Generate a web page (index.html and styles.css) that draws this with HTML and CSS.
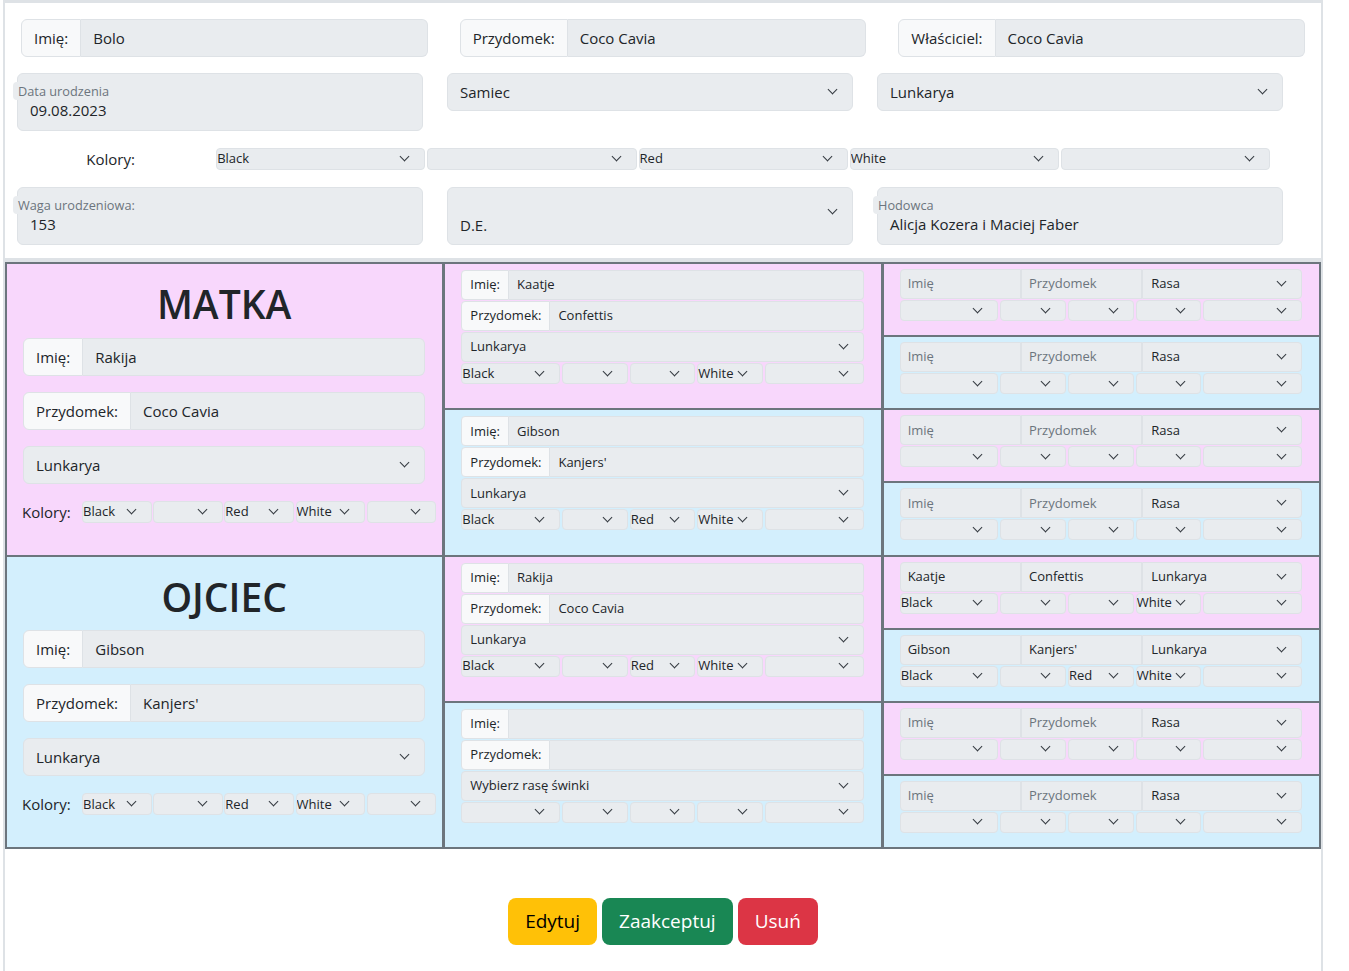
FILE: index.html
```html
<!DOCTYPE html>
<html lang="pl">
<head>
<meta charset="utf-8">
<title>Bolo – rodowód</title>
<link rel="stylesheet" href="styles.css">
</head>
<body>
<div class="page">
  <div class="row-top">
    <div class="col"><div class="ig"><span class="ig-label">Imię:</span><span class="ig-value">Bolo</span></div></div>
    <div class="col"><div class="ig"><span class="ig-label">Przydomek:</span><span class="ig-value">Coco Cavia</span></div></div>
    <div class="col"><div class="ig"><span class="ig-label">Właściciel:</span><span class="ig-value">Coco Cavia</span></div></div>
  </div>

  <div class="row-three">
    <div class="cell"><div class="floating"><span class="fl-label">Data urodzenia</span><span class="fl-value">09.08.2023</span></div></div>
    <div class="cell"><div class="sel sel-md">Samiec</div></div>
    <div class="cell"><div class="sel sel-md">Lunkarya</div></div>
  </div>

  <div class="colors-top">
    <div class="colors-top-label">Kolory:</div>
    <div class="sel sel-xs">Black</div>
    <div class="sel sel-xs"></div>
    <div class="sel sel-xs">Red</div>
    <div class="sel sel-xs">White</div>
    <div class="sel sel-xs"></div>
  </div>

  <div class="row-three row-last">
    <div class="cell"><div class="floating"><span class="fl-label">Waga urodzeniowa:</span><span class="fl-value">153</span></div></div>
    <div class="cell"><div class="sel sel-tall">D.E.</div></div>
    <div class="cell"><div class="floating"><span class="fl-label">Hodowca</span><span class="fl-value">Alicja Kozera i Maciej Faber</span></div></div>
  </div>

  <div class="divider"></div>

  <div class="pedigree">
    <div class="gen">
      <div class="pcell pink parent">
        <h1 class="parent-title">MATKA</h1>
        <div class="ig"><span class="ig-label">Imię:</span><span class="ig-value">Rakija</span></div>
        <div class="ig"><span class="ig-label">Przydomek:</span><span class="ig-value">Coco Cavia</span></div>
        <div class="sel sel-md">Lunkarya</div>
        <div class="pcolors">
          <span class="pcolors-label">Kolory:</span>
          <span class="sel sel-xs">Black</span><span class="sel sel-xs"></span><span class="sel sel-xs">Red</span><span class="sel sel-xs">White</span><span class="sel sel-xs"></span>
        </div>
      </div>
      <div class="pcell blue parent">
        <h1 class="parent-title">OJCIEC</h1>
        <div class="ig"><span class="ig-label">Imię:</span><span class="ig-value">Gibson</span></div>
        <div class="ig"><span class="ig-label">Przydomek:</span><span class="ig-value">Kanjers'</span></div>
        <div class="sel sel-md">Lunkarya</div>
        <div class="pcolors">
          <span class="pcolors-label">Kolory:</span>
          <span class="sel sel-xs">Black</span><span class="sel sel-xs"></span><span class="sel sel-xs">Red</span><span class="sel sel-xs">White</span><span class="sel sel-xs"></span>
        </div>
      </div>
    </div>

    <div class="gen">
      <div class="pcell pink gp">
        <div class="ig ig-sm"><span class="ig-label">Imię:</span><span class="ig-value">Kaatje</span></div>
        <div class="ig ig-sm"><span class="ig-label">Przydomek:</span><span class="ig-value">Confettis</span></div>
        <div class="sel sel-sm">Lunkarya</div>
        <div class="cs-row"><span class="sel sel-xs">Black</span><span class="sel sel-xs"></span><span class="sel sel-xs"></span><span class="sel sel-xs">White</span><span class="sel sel-xs"></span></div>
      </div>
      <div class="pcell blue gp">
        <div class="ig ig-sm"><span class="ig-label">Imię:</span><span class="ig-value">Gibson</span></div>
        <div class="ig ig-sm"><span class="ig-label">Przydomek:</span><span class="ig-value">Kanjers'</span></div>
        <div class="sel sel-sm">Lunkarya</div>
        <div class="cs-row"><span class="sel sel-xs">Black</span><span class="sel sel-xs"></span><span class="sel sel-xs">Red</span><span class="sel sel-xs">White</span><span class="sel sel-xs"></span></div>
      </div>
      <div class="pcell pink gp">
        <div class="ig ig-sm"><span class="ig-label">Imię:</span><span class="ig-value">Rakija</span></div>
        <div class="ig ig-sm"><span class="ig-label">Przydomek:</span><span class="ig-value">Coco Cavia</span></div>
        <div class="sel sel-sm">Lunkarya</div>
        <div class="cs-row"><span class="sel sel-xs">Black</span><span class="sel sel-xs"></span><span class="sel sel-xs">Red</span><span class="sel sel-xs">White</span><span class="sel sel-xs"></span></div>
      </div>
      <div class="pcell blue gp">
        <div class="ig ig-sm"><span class="ig-label">Imię:</span><span class="ig-value"></span></div>
        <div class="ig ig-sm"><span class="ig-label">Przydomek:</span><span class="ig-value"></span></div>
        <div class="sel sel-sm">Wybierz rasę świnki</div>
        <div class="cs-row"><span class="sel sel-xs"></span><span class="sel sel-xs"></span><span class="sel sel-xs"></span><span class="sel sel-xs"></span><span class="sel sel-xs"></span></div>
      </div>
    </div>

    <div class="gen">
      <div class="pcell pink ggp">
        <div class="trio"><span class="t-in ph">Imię</span><span class="t-in ph">Przydomek</span><span class="sel t-sel">Rasa</span></div>
        <div class="cs-row"><span class="sel sel-xs"></span><span class="sel sel-xs"></span><span class="sel sel-xs"></span><span class="sel sel-xs"></span><span class="sel sel-xs"></span></div>
      </div>
      <div class="pcell blue ggp">
        <div class="trio"><span class="t-in ph">Imię</span><span class="t-in ph">Przydomek</span><span class="sel t-sel">Rasa</span></div>
        <div class="cs-row"><span class="sel sel-xs"></span><span class="sel sel-xs"></span><span class="sel sel-xs"></span><span class="sel sel-xs"></span><span class="sel sel-xs"></span></div>
      </div>
      <div class="pcell pink ggp">
        <div class="trio"><span class="t-in ph">Imię</span><span class="t-in ph">Przydomek</span><span class="sel t-sel">Rasa</span></div>
        <div class="cs-row"><span class="sel sel-xs"></span><span class="sel sel-xs"></span><span class="sel sel-xs"></span><span class="sel sel-xs"></span><span class="sel sel-xs"></span></div>
      </div>
      <div class="pcell blue ggp">
        <div class="trio"><span class="t-in ph">Imię</span><span class="t-in ph">Przydomek</span><span class="sel t-sel">Rasa</span></div>
        <div class="cs-row"><span class="sel sel-xs"></span><span class="sel sel-xs"></span><span class="sel sel-xs"></span><span class="sel sel-xs"></span><span class="sel sel-xs"></span></div>
      </div>
      <div class="pcell pink ggp">
        <div class="trio"><span class="t-in">Kaatje</span><span class="t-in">Confettis</span><span class="sel t-sel">Lunkarya</span></div>
        <div class="cs-row"><span class="sel sel-xs">Black</span><span class="sel sel-xs"></span><span class="sel sel-xs"></span><span class="sel sel-xs">White</span><span class="sel sel-xs"></span></div>
      </div>
      <div class="pcell blue ggp">
        <div class="trio"><span class="t-in">Gibson</span><span class="t-in">Kanjers'</span><span class="sel t-sel">Lunkarya</span></div>
        <div class="cs-row"><span class="sel sel-xs">Black</span><span class="sel sel-xs"></span><span class="sel sel-xs">Red</span><span class="sel sel-xs">White</span><span class="sel sel-xs"></span></div>
      </div>
      <div class="pcell pink ggp">
        <div class="trio"><span class="t-in ph">Imię</span><span class="t-in ph">Przydomek</span><span class="sel t-sel">Rasa</span></div>
        <div class="cs-row"><span class="sel sel-xs"></span><span class="sel sel-xs"></span><span class="sel sel-xs"></span><span class="sel sel-xs"></span><span class="sel sel-xs"></span></div>
      </div>
      <div class="pcell blue ggp">
        <div class="trio"><span class="t-in ph">Imię</span><span class="t-in ph">Przydomek</span><span class="sel t-sel">Rasa</span></div>
        <div class="cs-row"><span class="sel sel-xs"></span><span class="sel sel-xs"></span><span class="sel sel-xs"></span><span class="sel sel-xs"></span><span class="sel sel-xs"></span></div>
      </div>
    </div>
  </div>

  <div class="actions">
    <button type="button" class="btn btn-warning">Edytuj</button>
    <button type="button" class="btn btn-success">Zaakceptuj</button>
    <button type="button" class="btn btn-danger">Usuń</button>
  </div>
</div>
</body>
</html>
```

FILE: styles.css
```css
* { box-sizing: border-box; }
html, body { margin: 0; padding: 0; background: #fff; }
body {
  font-family: "Open Sans", "Noto Sans", "DejaVu Sans", sans-serif;
  font-size: 15px;
  line-height: 1.5;
  color: #212529;
}

.page {
  margin-left: 3px;
  width: 1320px;
  min-height: 971px;
  border-left: 2px solid #dee2e6;
  border-right: 2px solid #dee2e6;
  border-top: 3px solid #dee2e6;
}

/* ---------- top form ---------- */
.row-top {
  display: grid;
  grid-template-columns: repeat(3, 1fr);
  padding-top: 16px;
}
.row-top .col { padding: 0 16px; }

.ig { display: flex; height: 38px; }
.ig-label {
  display: flex;
  align-items: center;
  padding: 0 12px;
  background: #f8f9fa;
  border: 1px solid #dee2e6;
  border-radius: 6px 0 0 6px;
  white-space: nowrap;
}
.ig-value {
  flex: 1;
  min-width: 0;
  display: flex;
  align-items: center;
  padding: 0 12px;
  background: #e9ecef;
  border: 1px solid #dee2e6;
  border-left: 0;
  border-radius: 0 6px 6px 0;
  white-space: nowrap;
}

.row-three {
  display: grid;
  grid-template-columns: repeat(3, 430px);
  margin-top: 16px;
}
.row-three .cell { padding: 0 12px; }
.row-last { margin-top: 17px; }

.floating {
  height: 58px;
  display: flex;
  flex-direction: column;
  padding-top: 8px;
  background: #e9ecef;
  border: 1px solid #dee2e6;
  border-radius: 6px;
}
.fl-label {
  align-self: flex-start;
  margin-left: -5px;
  padding: 0 5px;
  height: 18px;
  line-height: 18px;
  font-size: 12.75px;
  color: #6c757d;
  background: #e9ecef;
  border-radius: 4px;
}
.fl-value {
  padding-left: 12px;
  height: 20px;
  line-height: 20px;
}

/* ---------- select look ---------- */
.sel {
  display: flex;
  align-items: center;
  background: #e9ecef;
  border: 1px solid #dee2e6;
  white-space: nowrap;
  overflow: hidden;
}
.sel::after {
  content: "";
  flex: none;
  width: 6px;
  height: 6px;
  margin-left: auto;
  margin-right: 16px;
  margin-top: -5px;
  border-right: 1.5px solid #343a40;
  border-bottom: 1.5px solid #343a40;
  transform: rotate(45deg);
}
.sel-md {
  height: 38px;
  padding-left: 12px;
  border-radius: 6px;
}
.sel-tall {
  height: 58px;
  padding-left: 12px;
  padding-bottom: 8px;
  border-radius: 6px;
  align-items: flex-end;
}
.sel-tall::after { align-self: center; }
.sel-xs {
  height: 22px;
  padding-left: 0;
  font-size: 13px;
  border-radius: 4px;
}

.colors-top {
  display: grid;
  grid-template-columns: repeat(6, 211.2px);
  margin-top: 17px;
  height: 22px;
}
.colors-top .sel-xs { margin-right: 2px; }
.colors-top-label {
  display: flex;
  align-items: center;
  justify-content: center;
}

.divider {
  margin-top: 13px;
  height: 4px;
  background: #dee2e6;
}

/* ---------- pedigree ---------- */
.pedigree {
  display: flex;
  height: 587px;
  border: 1px solid #6c757d;
}
.gen {
  flex: 1 1 0;
  min-width: 0;
  display: flex;
  flex-direction: column;
}
.gen + .gen { border-left: 1px solid #6c757d; }
.pcell {
  flex: 1 1 0;
  min-height: 0;
  border: 1px solid #6c757d;
}
.pink { background: #f8d7fc; }
.blue { background: #d3effd; }

.parent { padding: 0 17px 0 16px; }
.parent-title {
  margin: 17px 0 10px;
  font-size: 39px;
  font-weight: 600;
  line-height: 1.2;
  text-align: center;
}
.parent .ig { margin-bottom: 16px; }
.parent .sel-md { margin-bottom: 17px; }
.pcolors {
  display: flex;
  align-items: center;
  gap: 1.5px;
  height: 22px;
  margin: 0 -11px 0 -1px;
}
.pcolors-label { flex: none; width: 58.5px; }
.pcolors .sel-xs { flex: 1 1 0; min-width: 0; }

.gp { padding: 6px 17px 0 16px; }
.ig-sm { height: 30px; margin-bottom: 1px; font-size: 13px; }
.ig-sm .ig-label { padding: 0 8px; border-radius: 4px 0 0 4px; }
.ig-sm .ig-value { padding: 0 8px; border-radius: 0 4px 4px 0; }
.sel-sm {
  height: 30px;
  margin-bottom: 1px;
  padding-left: 8px;
  font-size: 13px;
  border-radius: 4px;
}

.cs-row {
  display: grid;
  grid-template-columns: 3fr 2fr 2fr 2fr 3fr;
  column-gap: 2px;
  height: 21px;
}
.cs-row .sel-xs { height: 21px; min-width: 0; }

.ggp { padding: 5px 17px 0 16px; }
.trio {
  display: flex;
  height: 30px;
  margin-bottom: 1px;
  font-size: 13px;
}
.t-in {
  flex: 3 1 0;
  min-width: 0;
  display: flex;
  align-items: center;
  padding-left: 7px;
  background: #e9ecef;
  border: 1px solid #dee2e6;
  white-space: nowrap;
}
.t-in:first-child { border-radius: 4px 0 0 4px; }
.t-sel {
  flex: 4 1 0;
  min-width: 0;
  padding-left: 8px;
  border-radius: 0 4px 4px 0;
}
.ph { color: #6c757d; }

/* ---------- buttons ---------- */
.actions {
  display: flex;
  justify-content: center;
  gap: 5px;
  margin-top: 49px;
}
.btn {
  font-family: inherit;
  font-size: 19px;
  line-height: 29px;
  padding: 8px 16px;
  border: 1px solid transparent;
  border-radius: 8px;
  cursor: pointer;
}
.btn-warning { background: #ffc107; color: #000; }
.btn-success { background: #198754; color: #fff; }
.btn-danger { background: #dc3545; color: #fff; }
```
